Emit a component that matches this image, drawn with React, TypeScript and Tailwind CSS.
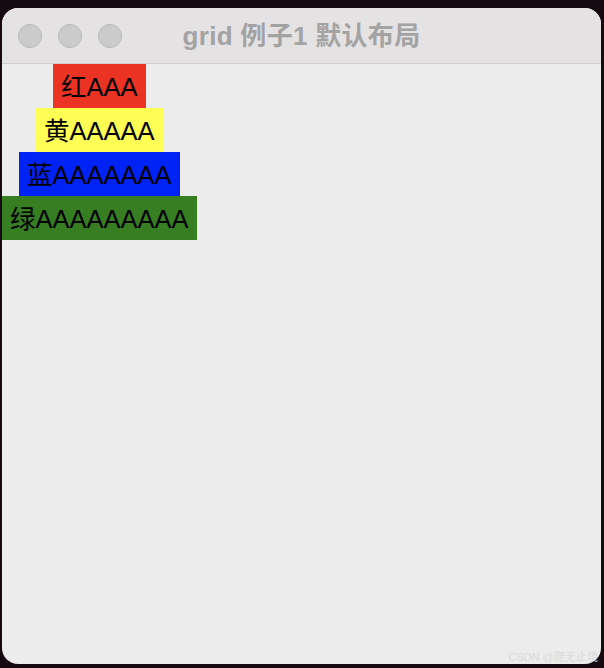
import React from "react";

const FONT = '"Liberation Sans", "Noto Sans CJK SC", sans-serif';

const items = [
  { label: "红AAA", bg: "bg-[#eb3324]" },
  { label: "黄AAAAA", bg: "bg-[#fffe54]" },
  { label: "蓝AAAAAAA", bg: "bg-[#0023f5]" },
  { label: "绿AAAAAAAAA", bg: "bg-[#377d22]" },
];

function Dot() {
  return <div className="w-[24px] h-[24px] rounded-full bg-[#cbcbcb] border border-[#b8b8b8]" />;
}

export default function App() {
  return (
    <div
      className="relative w-[604px] h-[668px] overflow-hidden bg-[#140a10] pt-[8px] pl-[2px]"
      style={{ fontFamily: FONT }}
    >
      <div className="w-[599px] h-[656px] rounded-[16px] overflow-hidden bg-[#ececec] flex flex-col">
        {/* title bar */}
        <div className="h-[56px] shrink-0 bg-[#e4e2e3] border-b border-[#cfcdce] grid grid-cols-[1fr_auto_1fr] items-center">
          <div className="flex gap-[16px] pl-[16px]">
            <Dot />
            <Dot />
            <Dot />
          </div>
          <div className="text-[26px] font-bold text-[#a3a3a3] leading-none tracking-[0.3px]">grid 例子1 默认布局</div>
          <div />
        </div>
        {/* grid content */}
        <div className="grid justify-items-center w-max">
          {items.map((it) => (
            <div
              key={it.label}
              className={`${it.bg} h-[44px] px-[8px] pt-[3px] flex items-center text-[25.5px] text-black leading-none`}
            >
              {it.label}
            </div>
          ))}
        </div>
      </div>
      <div className="absolute right-[6px] bottom-[5px] text-[11px] text-[#dadada] leading-none">
        CSDN @爬无止境
      </div>
    </div>
  );
}
